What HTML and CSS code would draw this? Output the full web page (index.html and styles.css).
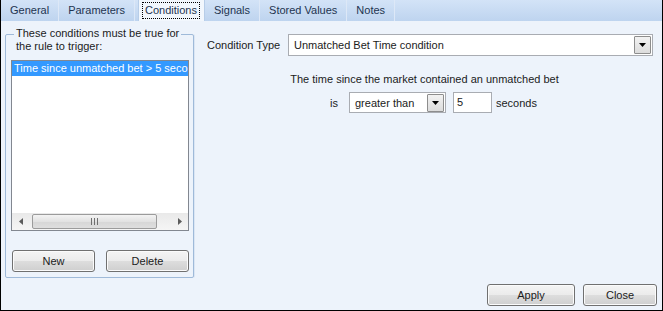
FILE: index.html
```html
<!DOCTYPE html>
<html lang="en">
<head>
    <meta charset="UTF-8">
    <title>Rule Conditions</title>
    <link rel="stylesheet" href="styles.css">
</head>
<body>
    <div class="window">
        <div class="tabs">
            <div class="tab">General</div>
            <div class="tab">Parameters</div>
            <div class="tab active"><span class="focus">Conditions</span></div>
            <div class="tab">Signals</div>
            <div class="tab">Stored Values</div>
            <div class="tab">Notes</div>
        </div>

        <div class="panel">
            <div class="group">
                <div class="group-title">These conditions must be true for<br>the rule to trigger:</div>
                <div class="list">
                    <div class="list-items">
                        <div class="list-item selected">Time since unmatched bet &gt; 5 seconds</div>
                    </div>
                    <div class="hscroll">
                        <div class="scroll-arrow">
                            <svg width="4" height="7" viewBox="0 0 4 7"><polygon points="4,0 0,3.5 4,7" fill="#5b5b5b"/></svg>
                        </div>
                        <div class="scroll-track">
                            <div class="scroll-thumb">
                                <svg width="7" height="7" viewBox="0 0 7 7">
                                    <rect x="0" y="0" width="1" height="7" fill="#6f6f6f"/>
                                    <rect x="3" y="0" width="1" height="7" fill="#6f6f6f"/>
                                    <rect x="6" y="0" width="1" height="7" fill="#6f6f6f"/>
                                </svg>
                            </div>
                        </div>
                        <div class="scroll-arrow">
                            <svg width="4" height="7" viewBox="0 0 4 7"><polygon points="0,0 4,3.5 0,7" fill="#5b5b5b"/></svg>
                        </div>
                    </div>
                </div>
                <div class="group-buttons">
                    <button class="btn btn-group">New</button>
                    <button class="btn btn-group">Delete</button>
                </div>
            </div>

            <div class="details">
                <div class="type-row">
                    <span class="label">Condition Type</span>
                    <div class="combo combo-type">
                        <span class="combo-text">Unmatched Bet Time condition</span>
                        <span class="drop">
                            <svg width="7" height="4" viewBox="0 0 7 4"><polygon points="0,0 7,0 3.5,4" fill="#000"/></svg>
                        </span>
                    </div>
                </div>
                <div class="sentence">The time since the market contained an unmatched bet</div>
                <div class="compare-row">
                    <span class="label">is</span>
                    <div class="combo combo-op">
                        <span class="combo-text">greater than</span>
                        <span class="drop">
                            <svg width="7" height="4" viewBox="0 0 7 4"><polygon points="0,0 7,0 3.5,4" fill="#000"/></svg>
                        </span>
                    </div>
                    <div class="textbox">5</div>
                    <span class="label">seconds</span>
                </div>
            </div>
        </div>

        <div class="footer">
            <button class="btn btn-apply">Apply</button>
            <button class="btn btn-close">Close</button>
        </div>
    </div>
</body>
</html>
```

FILE: styles.css
```css
body {
    margin: 0;
    padding: 0;
    font-family: "Liberation Sans", Arial, sans-serif;
    font-size: 11px;
    color: #1b1b1b;
    background-color: #edf3fb;
}

.window {
    width: 663px;
    height: 311px;
    box-sizing: border-box;
    border: 1px solid #000;
    border-top: none;
    background-color: #edf3fb;
    display: flex;
    flex-direction: column;
}

/* tab strip */
.tabs {
    height: 21px;
    display: flex;
    background: linear-gradient(#d3e3f7, #bed4ef);
    flex-shrink: 0;
}

.tab {
    padding: 0 9px 0 9px;
    line-height: 21px;
    color: #1e3450;
    border-right: 1px solid #dde8f7;
}

.tab.active {
    background-color: #f2f7fd;
    padding: 0 5px 0 4px;
    margin-left: 3px;
    display: flex;
    align-items: center;
    border-left: 1px solid #b7cde8;
    border-right: 1px solid #b7cde8;
}

.focus {
    outline: 1px dotted #000;
    padding: 0 2px;
    line-height: 15px;
}

/* main area */
.panel {
    height: 257px;
    display: flex;
    flex-shrink: 0;
}

.group {
    width: 189px;
    height: 244px;
    box-sizing: border-box;
    margin: 13px 0 0 4px;
    border: 1px solid #9fbad9;
    border-radius: 2px;
    padding: 0 4px 5px 5px;
    display: flex;
    flex-direction: column;
    box-shadow: 1px 0 0 #dbe6f4;
}

.group-title {
    width: fit-content;
    margin: -8px 0 0 3px;
    padding: 0 2px;
    line-height: 13px;
    background-color: #edf3fb;
}

.list {
    width: 178px;
    height: 171px;
    box-sizing: border-box;
    margin-top: 7px;
    border: 1px solid #828790;
    background-color: #fff;
    display: flex;
    flex-direction: column;
}

.list-items {
    flex: 1;
    overflow: hidden;
}

.list-item {
    height: 15px;
    line-height: 15px;
    padding-left: 2px;
    white-space: nowrap;
    overflow: hidden;
}

.list-item.selected {
    background-color: #3399ff;
    color: #fff;
}

.hscroll {
    height: 17px;
    display: flex;
    background: linear-gradient(#e9e9e9, #f5f5f5);
}

.scroll-arrow {
    width: 17px;
    display: flex;
    align-items: center;
    justify-content: center;
}

.scroll-track {
    flex: 1;
    padding: 1px 14px 1px 3px;
    display: flex;
}

.scroll-thumb {
    flex: 1;
    border: 1px solid #9b9b9b;
    border-radius: 2px;
    background: linear-gradient(#f3f3f3, #e2e2e2 50%, #d6d6d6 51%, #dedede);
    display: flex;
    align-items: center;
    justify-content: center;
}

.group-buttons {
    display: flex;
    gap: 11px;
    margin: 19px 0 0 1px;
}

/* buttons */
.btn {
    height: 22px;
    box-sizing: border-box;
    padding: 0;
    font-family: "Liberation Sans", Arial, sans-serif;
    font-size: 11px;
    color: #1b1b1b;
    border: 1px solid #707070;
    border-radius: 3px;
    background: linear-gradient(#f4f4f4, #ebebeb 50%, #dddddd 51%, #cfcfcf);
    box-shadow: inset 0 0 0 1px #fbfbfb;
}

.btn-group {
    width: 83px;
}

.btn-apply {
    width: 88px;
}

.btn-close {
    width: 74px;
}

/* right side */
.details {
    flex: 1;
    padding: 13px 9px 0 13px;
}

.type-row {
    display: flex;
    align-items: center;
}

.type-row .label {
    width: 81px;
}

.combo {
    height: 22px;
    box-sizing: border-box;
    border: 1px solid #a9acb2;
    background-color: #fff;
    display: flex;
    align-items: center;
    padding: 1px;
}

.combo-type {
    flex: 1;
}

.combo-op {
    width: 97px;
    height: 21px;
    margin-left: 11px;
}

.combo-text {
    flex: 1;
    padding-left: 4px;
}

.drop {
    width: 15px;
    height: 16px;
    border: 1px solid #8d8d8d;
    border-radius: 1px;
    background: linear-gradient(#f2f2f2, #dcdcdc);
    display: flex;
    align-items: center;
    justify-content: center;
}

.sentence {
    margin: 17px 11px 0 0;
    line-height: 13px;
    text-align: center;
}

.compare-row {
    display: flex;
    align-items: center;
    justify-content: center;
    margin: 6px 0 0 0;
    padding-left: 7px;
}

.textbox {
    width: 39px;
    height: 21px;
    box-sizing: border-box;
    margin: 0 4px 0 7px;
    border: 1px solid #a9acb2;
    background-color: #fff;
    padding-left: 3px;
    line-height: 19px;
}

/* bottom bar */
.footer {
    flex: 1;
    display: flex;
    justify-content: flex-end;
    gap: 8px;
    padding: 6px 5px 0 0;
}
```
